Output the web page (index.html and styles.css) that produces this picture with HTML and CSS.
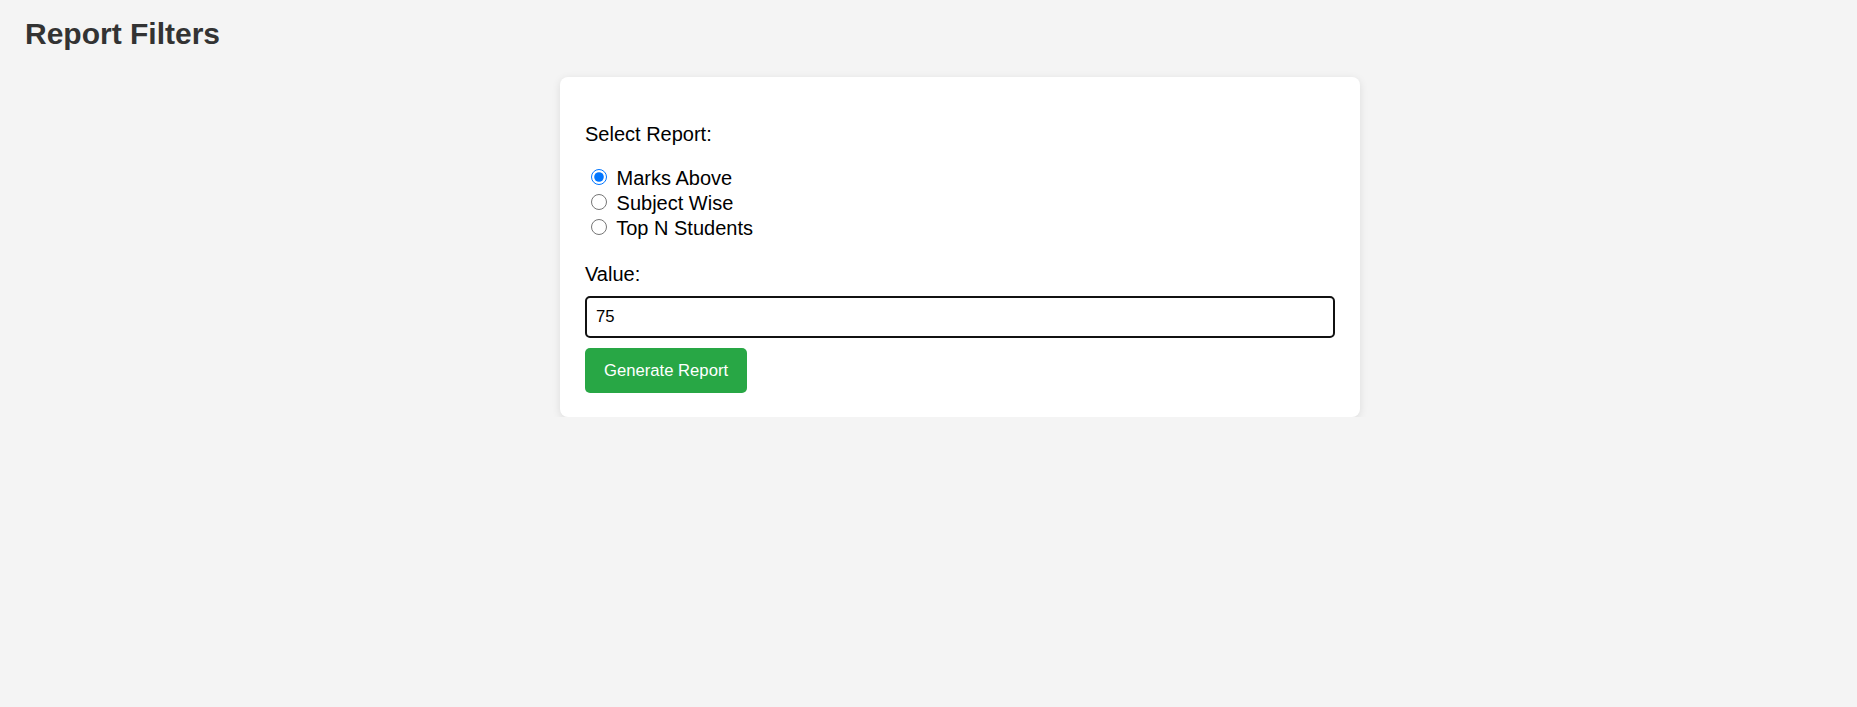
FILE: index.html
```html
<!DOCTYPE html>
<html lang="en">
<head>
<meta charset="utf-8">
<title>Report Filters</title>
<link rel="stylesheet" href="styles.css">
</head>
<body>
<h1 class="page-title">Report Filters</h1>
<main class="main">
  <form class="card">
    <label class="field-label field-label--first">Select Report:</label>
    <div class="radio-group">
      <label class="radio-row"><input class="radio" type="radio" name="report" checked> Marks Above</label>
      <label class="radio-row"><input class="radio" type="radio" name="report"> Subject Wise</label>
      <label class="radio-row"><input class="radio" type="radio" name="report"> Top N Students</label>
    </div>
    <label class="field-label">Value:</label>
    <input class="text-input" type="text" value="75">
    <button class="btn" type="button">Generate Report</button>
  </form>
</main>
</body>
</html>
```

FILE: styles.css
```css
html, body {
  margin: 0;
  padding: 0;
}

body {
  background: #f4f4f4;
  font-family: "Liberation Sans", Arial, sans-serif;
  color: #000;
  padding: 0 25px;
}

.page-title {
  font-size: 30px;
  font-weight: bold;
  color: #333;
  margin: 17px 0 26px;
  line-height: normal;
}

.main {
  padding-left: 63px;
}

.card {
  box-sizing: border-box;
  width: 800px;
  margin: 0 auto;
  background: #fff;
  border-radius: 8px;
  box-shadow: 0 2px 8px rgba(0, 0, 0, 0.1);
  padding: 25px 25px 24px;
  display: flex;
  flex-direction: column;
  align-items: flex-start;
}

.field-label {
  display: block;
  font-size: 20px;
  line-height: 23px;
}

.field-label--first {
  margin-top: 21px;
}

.radio-group {
  margin: 20px 0 22px;
  display: flex;
  flex-direction: column;
}

.radio-row {
  display: block;
  font-size: 20px;
  line-height: 25px;
}

.radio {
  width: 16px;
  height: 16px;
  margin: 3px 4px 0 6px;
  vertical-align: baseline;
  accent-color: #0075ff;
}

.text-input {
  box-sizing: border-box;
  width: 100%;
  height: 42px;
  margin-top: 10px;
  padding: 0 9px;
  border: 2px solid #111;
  border-radius: 5px;
  font-family: "Liberation Sans", Arial, sans-serif;
  font-size: 16.67px;
  color: #000;
  background: #fff;
  outline: none;
}

.btn {
  margin-top: 10px;
  height: 45px;
  padding: 0 19px;
  border: none;
  border-radius: 5px;
  background: #28a745;
  color: #fff;
  font-family: "Liberation Sans", Arial, sans-serif;
  font-size: 16.67px;
  cursor: pointer;
}
```
